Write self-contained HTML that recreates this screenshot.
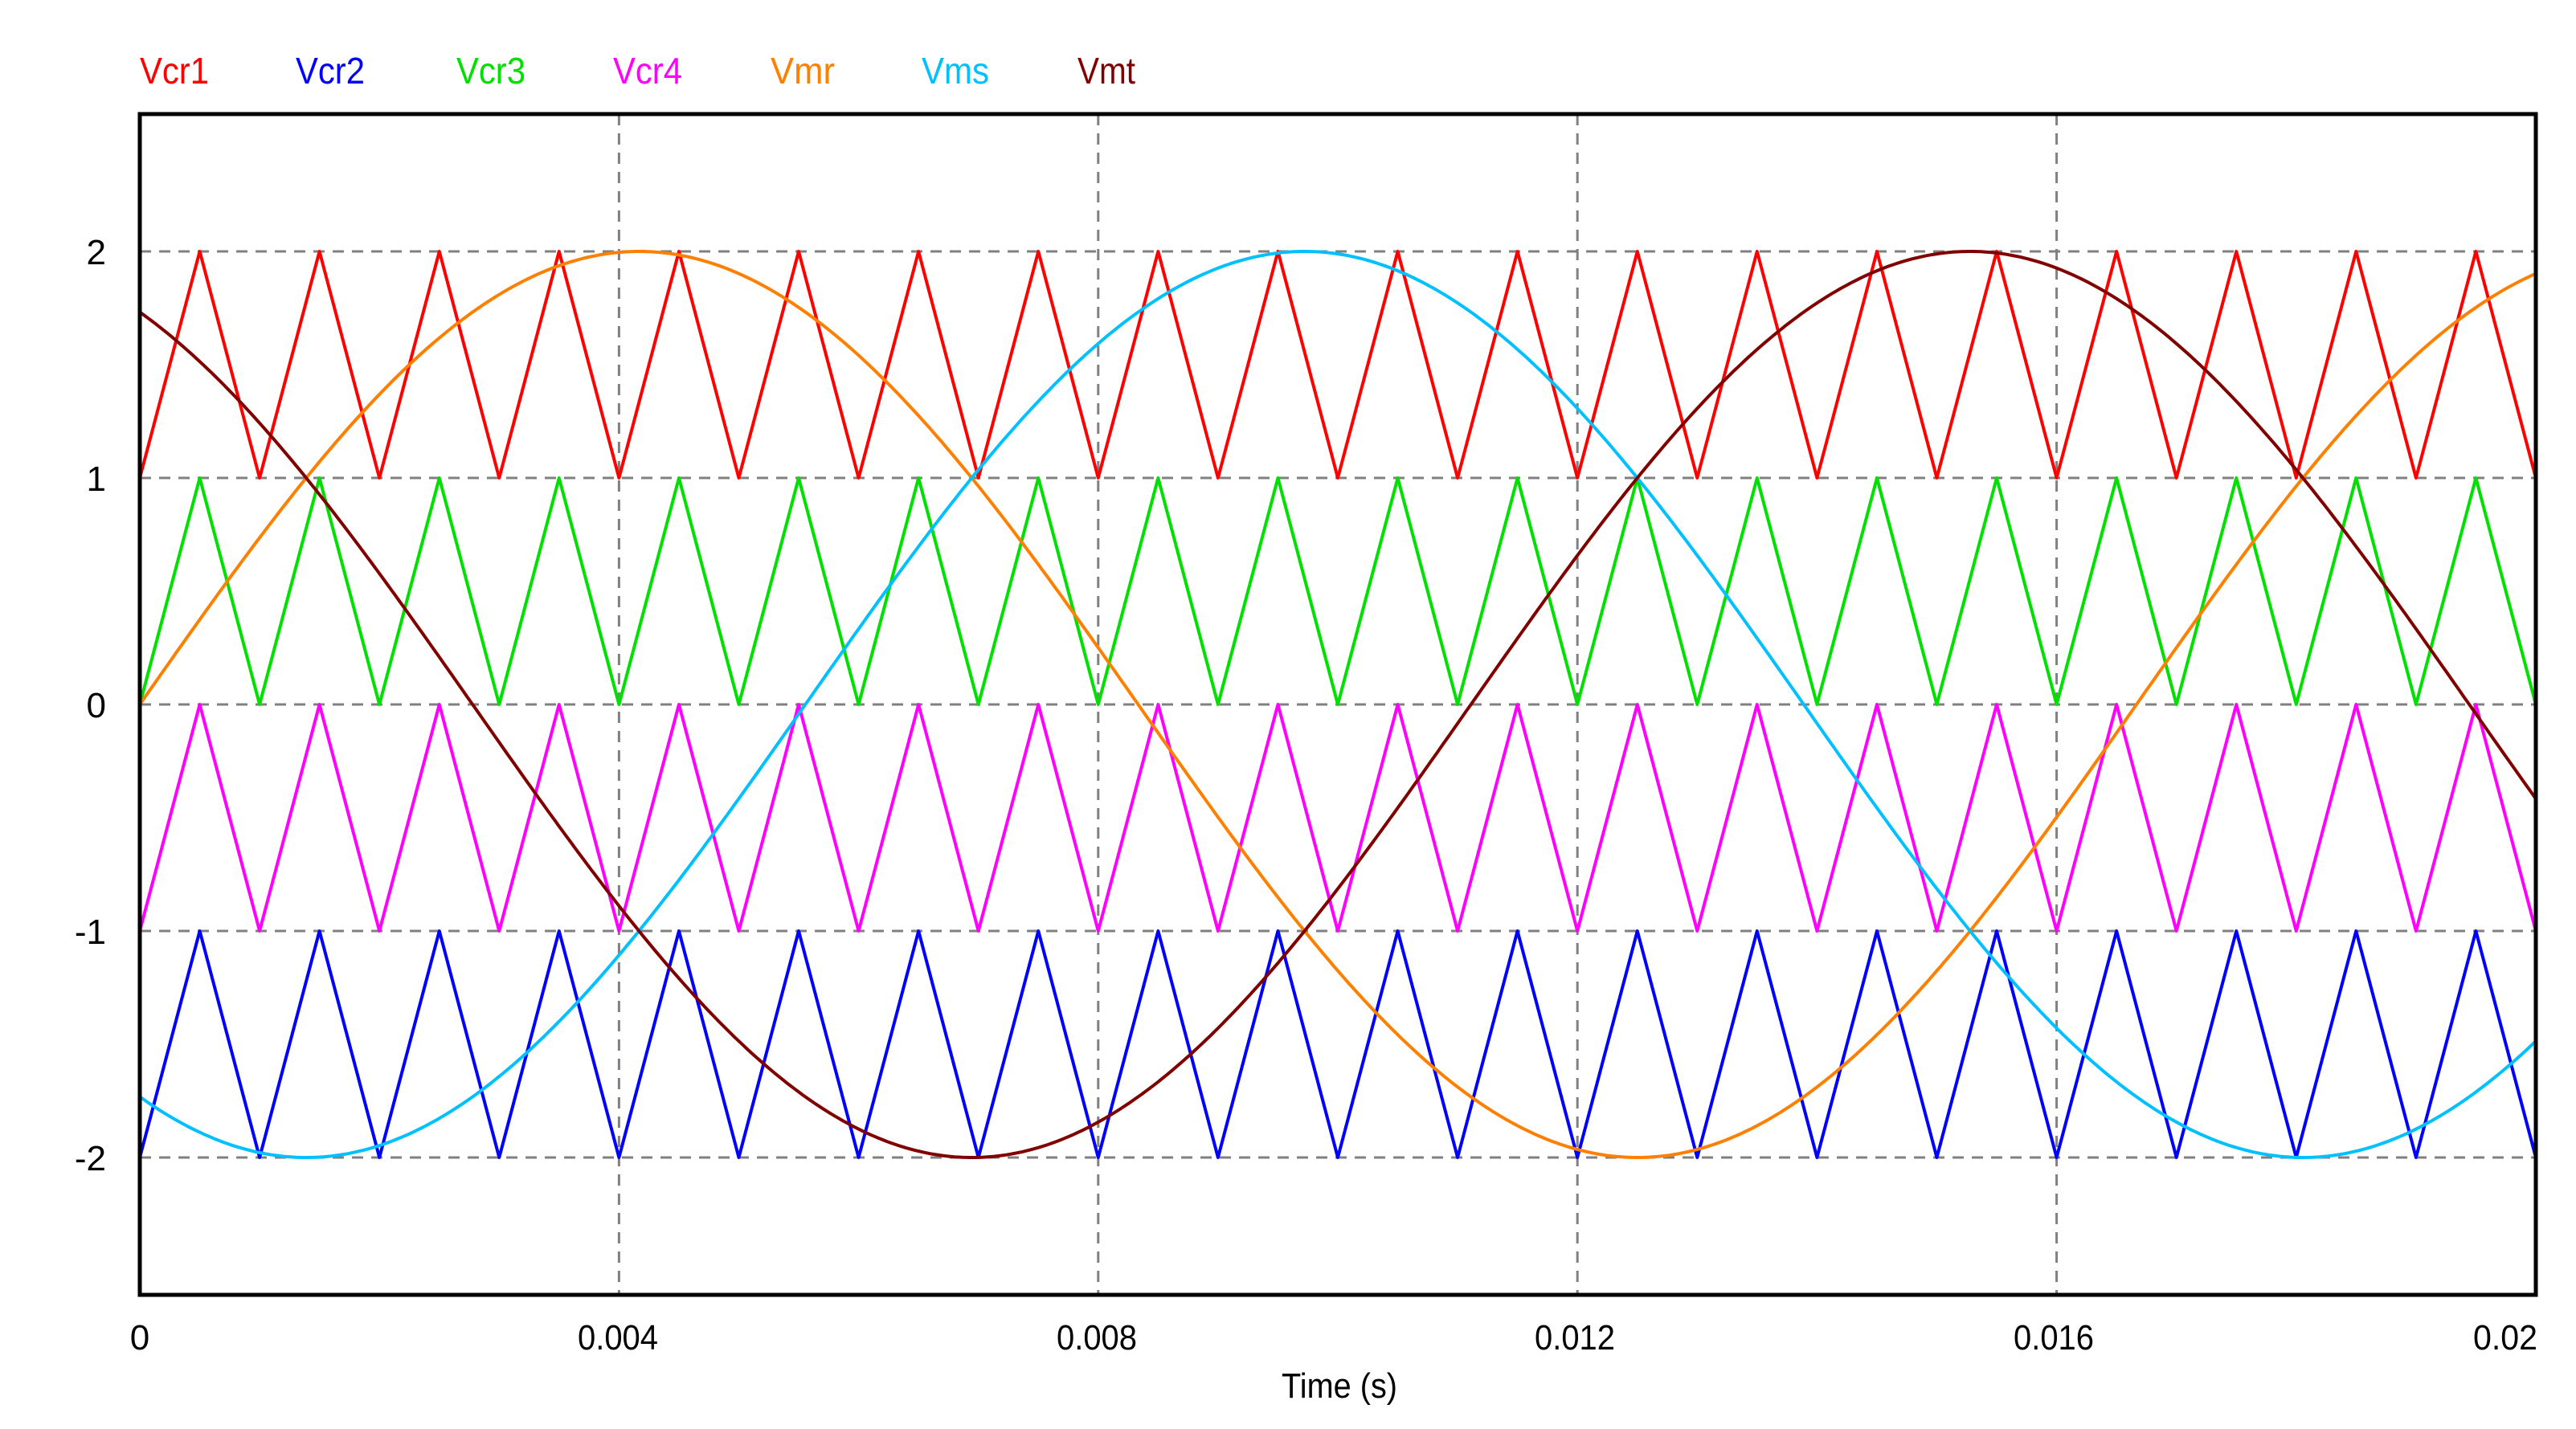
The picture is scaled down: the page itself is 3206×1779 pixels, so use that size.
<!DOCTYPE html>
<html><head><meta charset="utf-8"><style>
html,body{margin:0;padding:0;background:#fff;}
svg{display:block;}
text{font-family:"Liberation Sans",sans-serif;}
</style></head><body>
<svg id="s" width="3206" height="1779" xmlns="http://www.w3.org/2000/svg">
<rect width="3206" height="1779" fill="#fff"/>
<g font-size="46">
<text x="174" y="104" fill="#ff0000" textLength="86" lengthAdjust="spacingAndGlyphs">Vcr1</text>
<text x="368" y="104" fill="#0000ff" textLength="86" lengthAdjust="spacingAndGlyphs">Vcr2</text>
<text x="568" y="104" fill="#00e000" textLength="86" lengthAdjust="spacingAndGlyphs">Vcr3</text>
<text x="763" y="104" fill="#ff00ff" textLength="86" lengthAdjust="spacingAndGlyphs">Vcr4</text>
<text x="959" y="104" fill="#ff8000" textLength="80" lengthAdjust="spacingAndGlyphs">Vmr</text>
<text x="1147" y="104" fill="#00c0ff" textLength="84" lengthAdjust="spacingAndGlyphs">Vms</text>
<text x="1341" y="104" fill="#800000" textLength="72" lengthAdjust="spacingAndGlyphs">Vmt</text>
</g>
<g id="grid" stroke="#808080" stroke-width="3" stroke-dasharray="14,10"></g>
<g id="curves" fill="none" stroke-width="4" stroke-linejoin="round"></g>
<rect x="174" y="142" width="2982" height="1470" fill="none" stroke="#000" stroke-width="5"/>
<g font-size="44" fill="#000" text-anchor="end">
<text x="132" y="329">2</text>
<text x="132" y="611">1</text>
<text x="132" y="893">0</text>
<text x="132" y="1175">-1</text>
<text x="132" y="1457">-2</text>
</g>
<g font-size="44" fill="#000" text-anchor="middle">
<text x="174" y="1680">0</text>
<text x="769" y="1680" textLength="100" lengthAdjust="spacingAndGlyphs">0.004</text>
<text x="1365" y="1680" textLength="100" lengthAdjust="spacingAndGlyphs">0.008</text>
<text x="1960" y="1680" textLength="100" lengthAdjust="spacingAndGlyphs">0.012</text>
<text x="2556" y="1680" textLength="100" lengthAdjust="spacingAndGlyphs">0.016</text>
<text x="3118" y="1680" textLength="80" lengthAdjust="spacingAndGlyphs">0.02</text>
<text x="1667" y="1740" textLength="144" lengthAdjust="spacingAndGlyphs">Time (s)</text>
</g>
</svg>
<script>
var X0=174,X1=3156,Y0=877,U=282;
function px(t){return X0+(X1-X0)*t/0.02;}
function py(v){return Y0-v*U;}
var ns="http://www.w3.org/2000/svg";
var g=document.getElementById('grid');
[2,1,0,-1,-2].forEach(function(v){var l=document.createElementNS(ns,'line');l.setAttribute('x1',X0);l.setAttribute('x2',X1);l.setAttribute('y1',py(v));l.setAttribute('y2',py(v));g.appendChild(l);});
[0.004,0.008,0.012,0.016].forEach(function(t){var l=document.createElementNS(ns,'line');l.setAttribute('x1',px(t));l.setAttribute('x2',px(t));l.setAttribute('y1',142);l.setAttribute('y2',1612);g.appendChild(l);});
var c=document.getElementById('curves');
function add(d,col){var p=document.createElementNS(ns,'path');p.setAttribute('d',d);p.setAttribute('stroke',col);c.appendChild(p);}
function tri(lo,col){var d='';for(var k=0;k<=40;k++){var t=k*0.0005;var v=(k%2==0)?lo:lo+1;d+=(k?'L':'M')+px(t).toFixed(1)+' '+py(v).toFixed(1);}add(d,col);}
tri(1,'#ff0000');tri(0,'#00e000');tri(-1,'#ff00ff');tri(-2,'#0000ff');
function sine(ph,col){var d='';for(var i=0;i<=600;i++){var t=0.02*i/600;var v=2*Math.sin(2*Math.PI*60*t+ph);d+=(i?'L':'M')+px(t).toFixed(1)+' '+py(v).toFixed(1);}add(d,col);}
sine(0,'#ff8000');sine(-2*Math.PI/3,'#00c0ff');sine(2*Math.PI/3,'#800000');
</script>
</body></html>
